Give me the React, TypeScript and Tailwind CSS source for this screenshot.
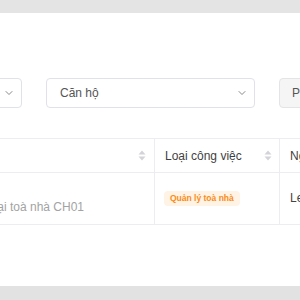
import { ChevronDown } from "lucide-react";

function SortIcon() {
  return (
    <svg width="8" height="11" viewBox="0 0 8 11" className="shrink-0">
      <path d="M4 0.5 L7.5 4.5 H0.5 Z" fill="#d4d4d8" />
      <path d="M4 10.5 L7.5 6.5 H0.5 Z" fill="#d4d4d8" />
    </svg>
  );
}

export default function App() {
  return (
    <div
      className="w-[300px] h-[300px] overflow-hidden flex flex-col bg-white"
      style={{ fontFamily: '"Liberation Sans", Arial, sans-serif' }}
    >
      <div className="h-[13px] shrink-0 bg-[#e4e4e4]" />

      <div className="flex-1 bg-white pt-[65px] overflow-hidden">
        {/* filters */}
        <div className="flex gap-[24px] ml-[-178px] h-[30px]">
          <div className="w-[200px] shrink-0 h-full rounded-[4px] border border-[#e1e1e8] flex items-center justify-end pr-[6px]">
            <ChevronDown className="w-[12px] h-[12px] text-[#6b6b6b]" strokeWidth={1.6} />
          </div>
          <div className="w-[209px] shrink-0 h-full rounded-[4px] border border-[#e1e1e8] flex items-center justify-between pl-[13px] pr-[6px]">
            <span className="text-[12px] text-[#555]">Căn hộ</span>
            <ChevronDown className="w-[12px] h-[12px] text-[#6b6b6b]" strokeWidth={1.6} />
          </div>
          <div className="w-[100px] shrink-0 h-full rounded-[4px] border border-[#e4e4e7] bg-[#f5f5f5] flex items-center pl-[12px]">
            <span className="text-[12px] text-[#555]">Phân loại</span>
          </div>
        </div>

        {/* table */}
        <div className="mt-[30px] ml-[-245px] w-[800px]">
          <div className="grid grid-cols-[400px_125px_275px] h-[35px] border-t border-b border-[#ececf1]">
            <div className="flex items-center justify-end pr-[8px] border-r border-[#ececf1]">
              <SortIcon />
            </div>
            <div className="flex items-center justify-between pl-[10px] pr-[7px] border-r border-[#ececf1]">
              <span className="text-[12px] text-[#3f3f3f]">Loại công việc</span>
              <SortIcon />
            </div>
            <div className="flex items-center pl-[10px]">
              <span className="text-[12px] text-[#3f3f3f]">Ngày tạo</span>
            </div>
          </div>
          <div className="grid grid-cols-[400px_125px_275px] h-[52px] border-b border-[#ececf1]">
            <div className="border-r border-[#ececf1] pt-[27px] flex justify-end pr-[70px]">
              <span className="text-[12px] leading-[15px] text-[#a3a3a3] whitespace-nowrap">
                Kiểm tra hệ thống tại toà nhà CH01
              </span>
            </div>
            <div className="border-r border-[#ececf1] pl-[9px] pt-[11px]">
              <span className="inline-flex items-center h-[15px] px-[6px] rounded-[4px] bg-[#fff3e6] text-[#fa8c16] text-[8.5px] font-bold">
                Quản lý toà nhà
              </span>
            </div>
            <div className="pl-[10px] pt-[12px]">
              <span className="text-[12px] leading-[15px] text-[#444]">Le Van A</span>
            </div>
          </div>
        </div>
      </div>

      <div className="h-[14px] shrink-0 bg-[#e2e2e2]" />
    </div>
  );
}
